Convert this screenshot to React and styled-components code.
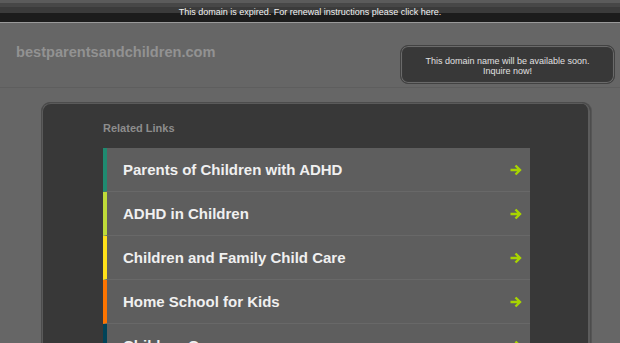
import React from "react";
import styled, { createGlobalStyle } from "styled-components";

const links = [
  { title: "Parents of Children with ADHD", color: "#1f8a70" },
  { title: "ADHD in Children", color: "#bedb39" },
  { title: "Children and Family Child Care", color: "#ffe11a" },
  { title: "Home School for Kids", color: "#fd7400" },
  { title: "Children Care", color: "#004358" },
];

const Arrow = () => (
  <svg width="12" height="12" viewBox="0 0 12 12">
    <path
      d="M0.5 6h9.5M5.5 1.5L10 6l-4.5 4.5"
      fill="none"
      stroke="#a8d400"
      strokeWidth="2.4"
    />
  </svg>
);

const App = () => {
  return (
    <Page>
      <GlobalStyle />
      <TopBar>This domain is expired. For renewal instructions please click here.</TopBar>

      <Header>
        <DomainName>bestparentsandchildren.com</DomainName>
        <InquireBox>
          This domain name will be available soon.
          <br />
          Inquire now!
        </InquireBox>
      </Header>

      <Panel>
        <PanelTitle>Related Links</PanelTitle>
        <LinkList>
          {links.map((link) => (
            <LinkRow key={link.title} $stripe={link.color}>
              <LinkText>{link.title}</LinkText>
              <Arrow />
            </LinkRow>
          ))}
        </LinkList>
      </Panel>
    </Page>
  );
};

const GlobalStyle = createGlobalStyle`
  html, body {
    margin: 0;
    padding: 0;
    background: #666666;
    font-family: "Liberation Sans", Arial, sans-serif;
    overflow: hidden;
  }
`;

const Page = styled.div`
  display: flex;
  flex-direction: column;
  height: 343px;
  overflow: hidden;
`;

const TopBar = styled.div`
  height: 23px;
  flex-shrink: 0;
  display: flex;
  align-items: center;
  justify-content: center;
  padding-top: 1px;
  box-sizing: border-box;
  font-size: 9px;
  color: #f2f2f2;
  background: linear-gradient(
    #5b5b5b 0px,
    #5b5b5b 3px,
    #474747 3px,
    #474747 7px,
    #3b3b3b 7px,
    #3b3b3b 13px,
    #1c1c1c 13px
  );
  border-bottom: 1px solid #9a9a9a;
`;

const Header = styled.div`
  height: 65px;
  flex-shrink: 0;
  box-sizing: border-box;
  display: flex;
  align-items: flex-start;
  justify-content: space-between;
  padding: 0 5px 0 16px;
  border-bottom: 1px solid #5e5e5e;
`;

const DomainName = styled.div`
  font-size: 14.6px;
  line-height: 16px;
  font-weight: bold;
  color: #929292;
  margin-top: 21px;
`;

const InquireBox = styled.div`
  width: 215px;
  height: 39px;
  box-sizing: border-box;
  margin-top: 22px;
  padding-top: 3px;
  display: flex;
  flex-direction: column;
  align-items: center;
  justify-content: center;
  text-align: center;
  font-size: 9px;
  line-height: 10px;
  color: #e0e0e0;
  background: #383838;
  border: 1px solid #424242;
  border-radius: 8px;
  box-shadow: inset 0 0 0 1px #6a6a6a, inset 0 0 0 2px #3a3a3a;
`;

const Panel = styled.div`
  margin: 14px 29px 0 41px;
  flex: 1;
  background: #383838;
  border: 1px solid #4c4c4c;
  border-bottom: none;
  border-radius: 9px 9px 0 0;
  box-shadow: inset 1px 1px 0 #5a5a5a, inset -2px 0 0 #5c5c5c, 1px 0 0 #555;
  padding: 19px 60px 0 61px;
`;

const PanelTitle = styled.div`
  font-size: 11px;
  font-weight: bold;
  color: #8d8d8d;
  margin-bottom: 14px;
`;

const LinkList = styled.div`
  display: flex;
  flex-direction: column;
`;

const LinkRow = styled.div`
  height: 44px;
  flex-shrink: 0;
  box-sizing: border-box;
  display: flex;
  align-items: center;
  justify-content: space-between;
  padding: 0 8px 0 16px;
  background: #5e5e5e;
  border-left: 4px solid ${(p) => p.$stripe};
  border-bottom: 1px solid #686868;
`;

const LinkText = styled.span`
  font-size: 15px;
  font-weight: bold;
  color: #f0f0f0;
`;

export default App;
